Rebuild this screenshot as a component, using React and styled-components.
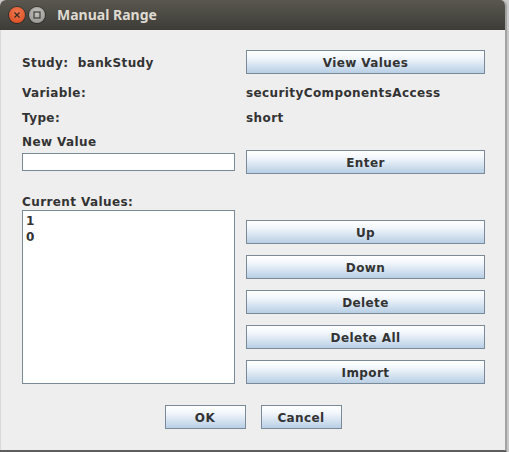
import React from "react";
import styled, { createGlobalStyle } from "styled-components";

const GlobalStyle = createGlobalStyle`
  html, body {
    margin: 0;
    padding: 0;
    background: #c9c9c9;
  }
  body {
    font-family: "DejaVu Sans", sans-serif;
  }
`;

const Frame = styled.div`
  width: 509px;
  height: 452px;
  display: flex;
  flex-direction: column;
  background: #c9c9c9;
  overflow: hidden;
`;

const Window = styled.div`
  width: 505px;
  height: 450px;
  display: flex;
  flex-direction: column;
  border-right: 2px solid #a2a2a2;
  border-bottom: 2px solid #5e5e5e;
  background: #eeeeee;
  border-top-left-radius: 6px;
  border-top-right-radius: 6px;
  overflow: hidden;
`;

const TitleBar = styled.div`
  height: 30px;
  flex: none;
  display: flex;
  align-items: center;
  padding-left: 9px;
  gap: 4px;
  background: linear-gradient(#59574f, #3d3c37);
`;

const CircleButton = styled.div`
  width: 16px;
  height: 16px;
  border-radius: 50%;
  display: flex;
  align-items: center;
  justify-content: center;
  background: ${(p) =>
    p.close
      ? "radial-gradient(circle at 50% 35%, #f07a50, #d9461c)"
      : "radial-gradient(circle at 50% 35%, #c4c3bf, #8f8e8a)"};
  box-shadow: 0 0 0 1px rgba(0, 0, 0, 0.35);
`;

const Title = styled.div`
  margin-left: 8px;
  color: #dfdbd2;
  font-family: "Noto Sans", "DejaVu Sans", sans-serif;
  font-weight: bold;
  font-size: 14px;
  line-height: 16px;
`;

const Body = styled.div`
  flex: 1;
  display: flex;
  flex-direction: column;
  border-left: 1px solid #dadada;
  padding: 20px 20px 0 21px;
`;

const Form = styled.div`
  display: grid;
  grid-template-columns: 213px 239px;
  grid-template-rows: 24px 36px 14px 26px 24px 36px 174px;
  column-gap: 11px;
  align-items: center;
`;

const Label = styled.div`
  font-size: 12px;
  font-weight: bold;
  letter-spacing: 0.4px;
  color: #333333;
  line-height: 16px;
  padding-top: 1px;
  white-space: pre;
  align-self: ${(p) => (p.bottom ? "end" : "center")};
`;

const Button = styled.button`
  height: 24px;
  width: ${(p) => p.width || "100%"};
  padding: 1px 0 0;
  box-sizing: border-box;
  border: 1px solid #7a8a99;
  border-radius: 0;
  background: linear-gradient(#ffffff 0%, #f3f7fc 30%, #b8cfe5 100%);
  font-family: "DejaVu Sans", sans-serif;
  font-size: 12px;
  font-weight: bold;
  letter-spacing: 0.4px;
  color: #333333;
`;

const TextField = styled.div`
  height: 18px;
  box-sizing: border-box;
  border: 1px solid #7a8a99;
  background: #ffffff;
`;

const List = styled.div`
  height: 174px;
  box-sizing: border-box;
  border: 1px solid #7a8a99;
  background: #ffffff;
  padding: 2px 0 0 3px;
  align-self: start;
`;

const ListItem = styled.div`
  font-size: 12px;
  font-weight: bold;
  color: #333333;
  line-height: 16px;
`;

const ButtonColumn = styled.div`
  height: 174px;
  align-self: start;
  display: flex;
  flex-direction: column;
  gap: 11px;
  padding-top: 10px;
  box-sizing: border-box;
`;

const Footer = styled.div`
  display: flex;
  justify-content: center;
  gap: 15px;
  margin-top: 21px;
  padding-right: 1px;
`;

export default function App() {
  return (
    <>
      <GlobalStyle />
      <Frame>
        <Window>
          <TitleBar>
            <CircleButton close>
              <svg width="8" height="8" viewBox="0 0 8 8">
                <path d="M1.5 1.5 L6.5 6.5 M6.5 1.5 L1.5 6.5" stroke="#3a2a22" strokeWidth="1.3" />
              </svg>
            </CircleButton>
            <CircleButton>
              <svg width="8" height="8" viewBox="0 0 8 8">
                <rect x="1" y="1" width="6" height="6" fill="none" stroke="#3c3c3a" strokeWidth="1.2" />
              </svg>
            </CircleButton>
            <Title>Manual Range</Title>
          </TitleBar>
          <Body>
            <Form>
              <Label>Study:  bankStudy</Label>
              <Button>View Values</Button>
              <Label>Variable:</Label>
              <Label>securityComponentsAccess</Label>
              <Label>Type:</Label>
              <Label>short</Label>
              <Label bottom>New Value</Label>
              <div />
              <TextField />
              <Button>Enter</Button>
              <Label bottom>Current Values:</Label>
              <div />
              <List>
                <ListItem>1</ListItem>
                <ListItem>0</ListItem>
              </List>
              <ButtonColumn>
                <Button>Up</Button>
                <Button>Down</Button>
                <Button>Delete</Button>
                <Button>Delete All</Button>
                <Button>Import</Button>
              </ButtonColumn>
            </Form>
            <Footer>
              <Button width="81px">OK</Button>
              <Button width="81px">Cancel</Button>
            </Footer>
          </Body>
        </Window>
      </Frame>
    </>
  );
}
